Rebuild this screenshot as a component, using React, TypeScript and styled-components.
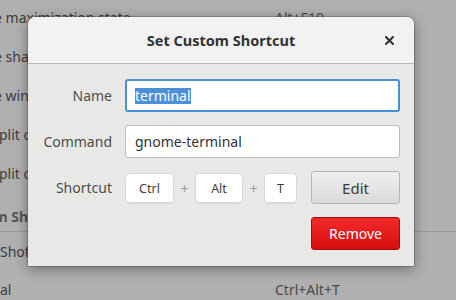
import React from 'react';
import styled, { createGlobalStyle } from 'styled-components';

const Global = createGlobalStyle`
  html, body {
    margin: 0;
    padding: 0;
    background: #b0b0b0;
    font-family: "Noto Sans", "DejaVu Sans", sans-serif;
  }
`;

const Screen = styled.div`
  position: relative;
  width: 456px;
  height: 300px;
  overflow: hidden;
  background: #b0b0b0;
`;

/* dimmed settings list behind the dialog */
const List = styled.div`
  display: flex;
  flex-direction: column;
  margin-top: -2px;
`;

const Row = styled.div`
  display: grid;
  grid-template-columns: 275px 1fr;
  align-items: center;
  height: ${(p: { $h?: number }) => p.$h ?? 39}px;
  font-size: 14px;
  color: #3c3c3c;
  white-space: nowrap;
`;

const RowLabel = styled.span<{ $shift?: number }>`
  margin-left: ${(p) => p.$shift ?? 0}px;
`;

const Accel = styled.span`
  color: #4a4a4a;
`;

const Section = styled.div`
  padding: 14px 0 4px;
  height: 20px;
  line-height: 20px;
  font-size: 14px;
  font-weight: bold;
  color: #555;
  white-space: nowrap;
  border-bottom: 1px solid #999;
  margin-left: -6px;
`;

/* dialog */
const Dialog = styled.div`
  position: absolute;
  left: 28px;
  top: 17px;
  width: 386px;
  height: 249px;
  display: flex;
  flex-direction: column;
  background: #e8e8e7;
  border-radius: 7px 7px 0 0;
  box-shadow: 0 0 0 1px rgba(0, 0, 0, 0.18), 0 3px 14px rgba(0, 0, 0, 0.4);
  overflow: hidden;
`;

const Header = styled.div`
  position: relative;
  height: 46px;
  display: flex;
  align-items: center;
  justify-content: center;
  background: #f2f2f2;
  border-bottom: 1px solid #b8b8b8;
`;

const Title = styled.div`
  font-size: 14.5px;
  font-weight: bold;
  color: #2e3436;
`;

const Close = styled.div`
  position: absolute;
  right: 20px;
  top: 19px;
  width: 9px;
  height: 9px;
  display: flex;
`;

const Body = styled.div`
  display: grid;
  grid-template-columns: 84px 1fr;
  grid-auto-rows: 33px;
  column-gap: 13px;
  row-gap: 13px;
  padding: 15px 14px 16px 0;
`;

const Label = styled.div`
  display: flex;
  align-items: center;
  justify-content: flex-end;
  font-size: 14px;
  color: #4c4c4c;
`;

const Field = styled.div<{ $focus?: boolean }>`
  display: flex;
  align-items: center;
  box-sizing: border-box;
  padding: 0 ${(p) => (p.$focus ? 8 : 9)}px;
  background: #fff;
  border: ${(p) => (p.$focus ? '2px solid #4a90d9' : '1px solid #bcbcbc')};
  border-radius: 3px;
  font-size: 14px;
  color: #2e3436;
`;

const Selected = styled.span`
  background: #4a90d9;
  color: #fff;
  line-height: 16px;
`;

const ShortcutRow = styled.div`
  display: flex;
  align-items: flex-end;
  justify-content: space-between;
`;

const Keys = styled.div`
  display: flex;
  align-items: center;
`;

const Key = styled.div<{ $w: number }>`
  box-sizing: border-box;
  width: ${(p) => p.$w}px;
  height: 31px;
  display: flex;
  align-items: center;
  justify-content: center;
  background: #fff;
  border: 1px solid #d8d8d8;
  border-bottom-width: 2px;
  border-radius: 5px;
  font-size: 12.5px;
  color: #3c3c3c;
`;

const Plus = styled.span`
  width: 21px;
  text-align: center;
  font-size: 14px;
  color: #9a9a9a;
`;

const Button = styled.div<{ $danger?: boolean }>`
  box-sizing: border-box;
  width: 89px;
  height: 33px;
  display: flex;
  align-items: center;
  justify-content: center;
  font-size: ${(p) => (p.$danger ? 14 : 15)}px;
  border-radius: 3px;
  color: ${(p) => (p.$danger ? '#fff' : '#3c3c3c')};
  border: 1px solid ${(p) => (p.$danger ? '#a50c0c' : '#b6b6b6')};
  background: ${(p) =>
    p.$danger
      ? 'linear-gradient(#f42a2a, #d90f0f)'
      : 'linear-gradient(#efefef, #dadada)'};
`;

const RemoveCell = styled.div`
  grid-column: 2;
  display: flex;
  justify-content: flex-end;
`;

export default function App() {
  return (
    <Screen>
      <Global />
      <List>
        <Row>
          <RowLabel $shift={-6}>e maximization state</RowLabel>
          <Accel>Alt+F10</Accel>
        </Row>
        <Row>
          <RowLabel $shift={-6}>e shaded state</RowLabel>
          <Accel />
        </Row>
        <Row>
          <RowLabel $shift={-6}>e window</RowLabel>
          <Accel />
        </Row>
        <Row>
          <RowLabel $shift={-1}>plit on left</RowLabel>
          <Accel />
        </Row>
        <Row>
          <RowLabel $shift={-1}>plit on right</RowLabel>
          <Accel />
        </Row>
        <Section>m Shortcuts</Section>
        <Row $h={38}>
          <RowLabel>Shotwell</RowLabel>
          <Accel />
        </Row>
        <Row $h={38}>
          <RowLabel>al</RowLabel>
          <Accel>Ctrl+Alt+T</Accel>
        </Row>
      </List>

      <Dialog>
        <Header>
          <Title>Set Custom Shortcut</Title>
          <Close>
            <svg width="9" height="9" viewBox="0 0 9 9">
              <path d="M1 1 L8 8 M8 1 L1 8" stroke="#2e3436" strokeWidth="2" strokeLinecap="square" />
            </svg>
          </Close>
        </Header>
        <Body>
          <Label>Name</Label>
          <Field $focus>
            <Selected>terminal</Selected>
          </Field>

          <Label>Command</Label>
          <Field>gnome-terminal</Field>

          <Label>Shortcut</Label>
          <ShortcutRow>
            <Keys>
              <Key $w={49}>Ctrl</Key>
              <Plus>+</Plus>
              <Key $w={48}>Alt</Key>
              <Plus>+</Plus>
              <Key $w={33}>T</Key>
            </Keys>
            <Button>Edit</Button>
          </ShortcutRow>

          <RemoveCell>
            <Button $danger>Remove</Button>
          </RemoveCell>
        </Body>
      </Dialog>
    </Screen>
  );
}
